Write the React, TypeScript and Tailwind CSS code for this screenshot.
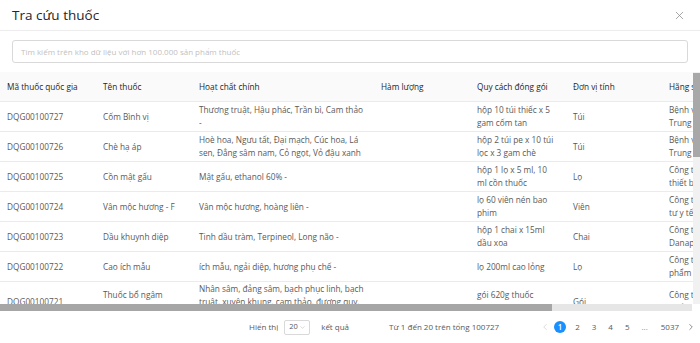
import { X, ChevronLeft, ChevronRight, ChevronDown } from 'lucide-react';

type Row = {
  code: string;
  name: string;
  active: string;
  amount: string;
  pack: string;
  unit: string;
  maker: string[];
};

const rows: Row[] = [
  {
    code: 'DQG00100727',
    name: 'Cốm Bình vị',
    active: 'Thương truật, Hậu phác, Trần bì, Cam thảo -',
    amount: '',
    pack: 'hộp 10 túi thiếc x 5 gam cốm tan',
    unit: 'Túi',
    maker: ['Bệnh viện Y học', 'Trung ương'],
  },
  {
    code: 'DQG00100726',
    name: 'Chè hạ áp',
    active: 'Hoè hoa, Ngưu tất, Đại mạch, Cúc hoa, Lá sen, Đẳng sâm nam, Cỏ ngọt, Vỏ đậu xanh',
    amount: '',
    pack: 'hộp 2 túi pe x 10 túi lọc x 3 gam chè',
    unit: 'Túi',
    maker: ['Bệnh viện Y học', 'Trung ương'],
  },
  {
    code: 'DQG00100725',
    name: 'Cồn mật gấu',
    active: 'Mật gấu, ethanol 60% -',
    amount: '',
    pack: 'hộp 1 lọ x 5 ml, 10 ml cồn thuốc',
    unit: 'Lọ',
    maker: ['Công ty TNHH', 'thiết bị y tế'],
  },
  {
    code: 'DQG00100724',
    name: 'Vân mộc hương - F',
    active: 'Vân mộc hương, hoàng liên -',
    amount: '',
    pack: 'lọ 60 viên nén bao phim',
    unit: 'Viên',
    maker: ['Công ty đầu', 'tư y tế'],
  },
  {
    code: 'DQG00100723',
    name: 'Dầu khuynh diệp',
    active: 'Tinh dầu tràm, Terpineol, Long não -',
    amount: '',
    pack: 'hộp 1 chai x 15ml dầu xoa',
    unit: 'Chai',
    maker: ['Công ty cổ phần', 'Danapha'],
  },
  {
    code: 'DQG00100722',
    name: 'Cao ích mẫu',
    active: 'ích mẫu, ngải diệp, hương phụ chế -',
    amount: '',
    pack: 'lọ 200ml cao lỏng',
    unit: 'Lọ',
    maker: ['Công ty dược', 'phẩm Bến Tre'],
  },
  {
    code: 'DQG00100721',
    name: 'Thuốc bổ ngâm rượu',
    active: 'Nhân sâm, đảng sâm, bạch phục linh, bạch truật, xuyên khung, cam thảo, đương quy, thục địa -',
    amount: '',
    pack: 'gói 620g thuốc thang',
    unit: 'Gói',
    maker: ['Công ty dược', 'phẩm Bình Định'],
  },
];

const headers = ['Mã thuốc quốc gia', 'Tên thuốc', 'Hoạt chất chính', 'Hàm lượng', 'Quy cách đóng gói', 'Đơn vị tính', 'Hãng sản xuất'];

export default function App() {
  return (
    <div
      className="w-[700px] h-[343px] bg-white flex flex-col overflow-hidden text-[#595959]"
      style={{ fontFamily: '"Open Sans", "Noto Sans", sans-serif' }}
    >
      <div className="h-[31px] flex-shrink-0 flex items-center justify-between pl-3 pr-[14px] border-b border-[#ececec]">
        <span className="text-[13.5px] text-[#262626]">Tra cứu thuốc</span>
        <X className="w-[13px] h-[13px] text-[#8c8c8c]" strokeWidth={1.4} />
      </div>

      <div className="px-3 pt-[9px] flex-shrink-0">
        <div className="h-[23px] border border-[#d9d9d9] rounded-[3px] flex items-center px-2 text-[8px] text-[#bfbfbf]">
          Tìm kiếm trên kho dữ liệu với hơn 100.000 sản phẩm thuốc
        </div>
      </div>

      <div className="mt-[9px] h-[232px] flex flex-shrink-0">
        <div className="w-[693px] overflow-hidden">
          <table className="table-fixed border-collapse w-[908px] text-[8.25px] leading-[13px]">
            <colgroup>
              <col className="w-[96px]" />
              <col className="w-[96px]" />
              <col className="w-[182px]" />
              <col className="w-[96px]" />
              <col className="w-[96px]" />
              <col className="w-[96px]" />
              <col className="w-[246px]" />
            </colgroup>
            <thead>
              <tr className="h-[29px] bg-[#fafafa] border-b border-[#ebebeb]">
                {headers.map((h) => (
                  <th key={h} className="text-left font-medium text-[#262626] px-[7px] whitespace-nowrap">
                    {h}
                  </th>
                ))}
              </tr>
            </thead>
            <tbody>
              {rows.map((r) => (
                <tr key={r.code} className="h-[30px] border-b border-[#ebebeb]">
                  <td className="pl-[7px] pr-[9px] align-middle">{r.code}</td>
                  <td className="pl-[7px] pr-[9px] align-middle">{r.name}</td>
                  <td className="pl-[7px] pr-[9px] align-middle">{r.active}</td>
                  <td className="pl-[7px] pr-[9px] align-middle">{r.amount}</td>
                  <td className="pl-[7px] pr-[9px] align-middle">{r.pack}</td>
                  <td className="pl-[7px] pr-[9px] align-middle">{r.unit}</td>
                  <td className="pl-[7px] pr-[9px] align-middle whitespace-nowrap">
                    {r.maker[0]}
                    <br />
                    {r.maker[1]}
                  </td>
                </tr>
              ))}
            </tbody>
          </table>
        </div>
        <div className="w-[7px] bg-[#f1f1f1] pt-px">
          <div className="h-[84px] bg-[#a8a8a8]" />
        </div>
      </div>

      <div className="h-[7px] w-[692px] bg-[#e6e6e6] flex-shrink-0">
        <div className="h-full w-[552px] bg-[#a6a6a6]" />
      </div>

      <div className="flex-1 flex items-center pl-[249px] text-[8px] whitespace-nowrap">
        <span>Hiển thị</span>
        <div className="ml-[6px] w-[26px] h-[15px] border border-[#d9d9d9] rounded-[2px] flex items-center justify-between pl-[4px] pr-[3px] text-[7.5px]">
          <span>20</span>
          <ChevronDown className="w-[7px] h-[7px] text-[#bfbfbf]" strokeWidth={2} />
        </div>
        <span className="ml-[11px]">kết quả</span>
        <span className="ml-[40px]">Từ 1 đến 20 trên tổng 100727</span>
        <div className="ml-[41px] flex items-center">
          <ChevronLeft className="w-[10px] h-[10px] text-[#c8c8c8]" strokeWidth={1.6} />
          <span className="ml-[4px] w-[12px] h-[12px] rounded-full bg-[#1890ff] text-white flex items-center justify-center text-[8px] font-semibold">
            1
          </span>
          <span className="ml-[9px]">2</span>
          <span className="ml-[12px]">3</span>
          <span className="ml-[12px]">4</span>
          <span className="ml-[12px]">5</span>
          <span className="ml-[12px] text-[#8c8c8c]">...</span>
          <span className="ml-[13px]">5037</span>
          <ChevronRight className="ml-[7px] w-[10px] h-[10px] text-[#595959]" strokeWidth={1.6} />
        </div>
      </div>
    </div>
  );
}
